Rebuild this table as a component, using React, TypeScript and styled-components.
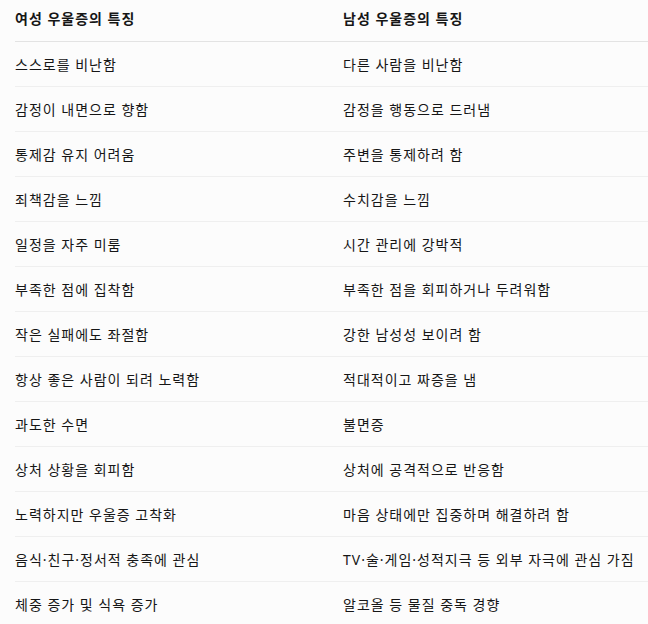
import styled, { createGlobalStyle } from 'styled-components';

const GlobalStyle = createGlobalStyle`
  html, body {
    margin: 0;
    padding: 0;
    background: #fcfcfc;
    overflow: hidden;
  }
`;

const rows: [string, string][] = [
  ['스스로를 비난함', '다른 사람을 비난함'],
  ['감정이 내면으로 향함', '감정을 행동으로 드러냄'],
  ['통제감 유지 어려움', '주변을 통제하려 함'],
  ['죄책감을 느낌', '수치감을 느낌'],
  ['일정을 자주 미룸', '시간 관리에 강박적'],
  ['부족한 점에 집착함', '부족한 점을 회피하거나 두려워함'],
  ['작은 실패에도 좌절함', '강한 남성성 보이려 함'],
  ['항상 좋은 사람이 되려 노력함', '적대적이고 짜증을 냄'],
  ['과도한 수면', '불면증'],
  ['상처 상황을 회피함', '상처에 공격적으로 반응함'],
  ['노력하지만 우울증 고착화', '마음 상태에만 집중하며 해결하려 함'],
  ['음식·친구·정서적 충족에 관심', 'TV·술·게임·성적지극 등 외부 자극에 관심 가짐'],
  ['체중 증가 및 식욕 증가', '알코올 등 물질 중독 경향'],
];

const App = () => {
  return (
    <>
      <GlobalStyle />
      <Wrapper>
        <Table>
          <thead>
            <tr>
              <Th>여성 우울증의 특징</Th>
              <Th>남성 우울증의 특징</Th>
            </tr>
          </thead>
          <tbody>
            {rows.map(([female, male]) => (
              <tr key={female}>
                <Td>{female}</Td>
                <Td>{male}</Td>
              </tr>
            ))}
          </tbody>
        </Table>
      </Wrapper>
    </>
  );
};

// Latin font first so the middle dots and spaces stay narrow
const Wrapper = styled.div`
  padding-left: 15px;
  font-family: 'Noto Sans', 'Noto Sans CJK KR', sans-serif;
  color: #161616;
  letter-spacing: 1px;
`;

const Table = styled.table`
  width: 656px;
  border-collapse: collapse;
  table-layout: fixed;
`;

const Th = styled.th`
  height: 41px;
  padding: 0 0 4px;
  text-align: left;
  font-size: 14px;
  font-weight: 700;
  border-bottom: 1px solid #e3e3e3;
  vertical-align: middle;
  box-sizing: border-box;
`;

const Td = styled.td`
  height: 45px;
  padding: 0;
  font-size: 14px;
  font-weight: 400;
  border-bottom: 1px solid #efefef;
  vertical-align: middle;
  box-sizing: border-box;
  white-space: nowrap;
`;

export default App;
